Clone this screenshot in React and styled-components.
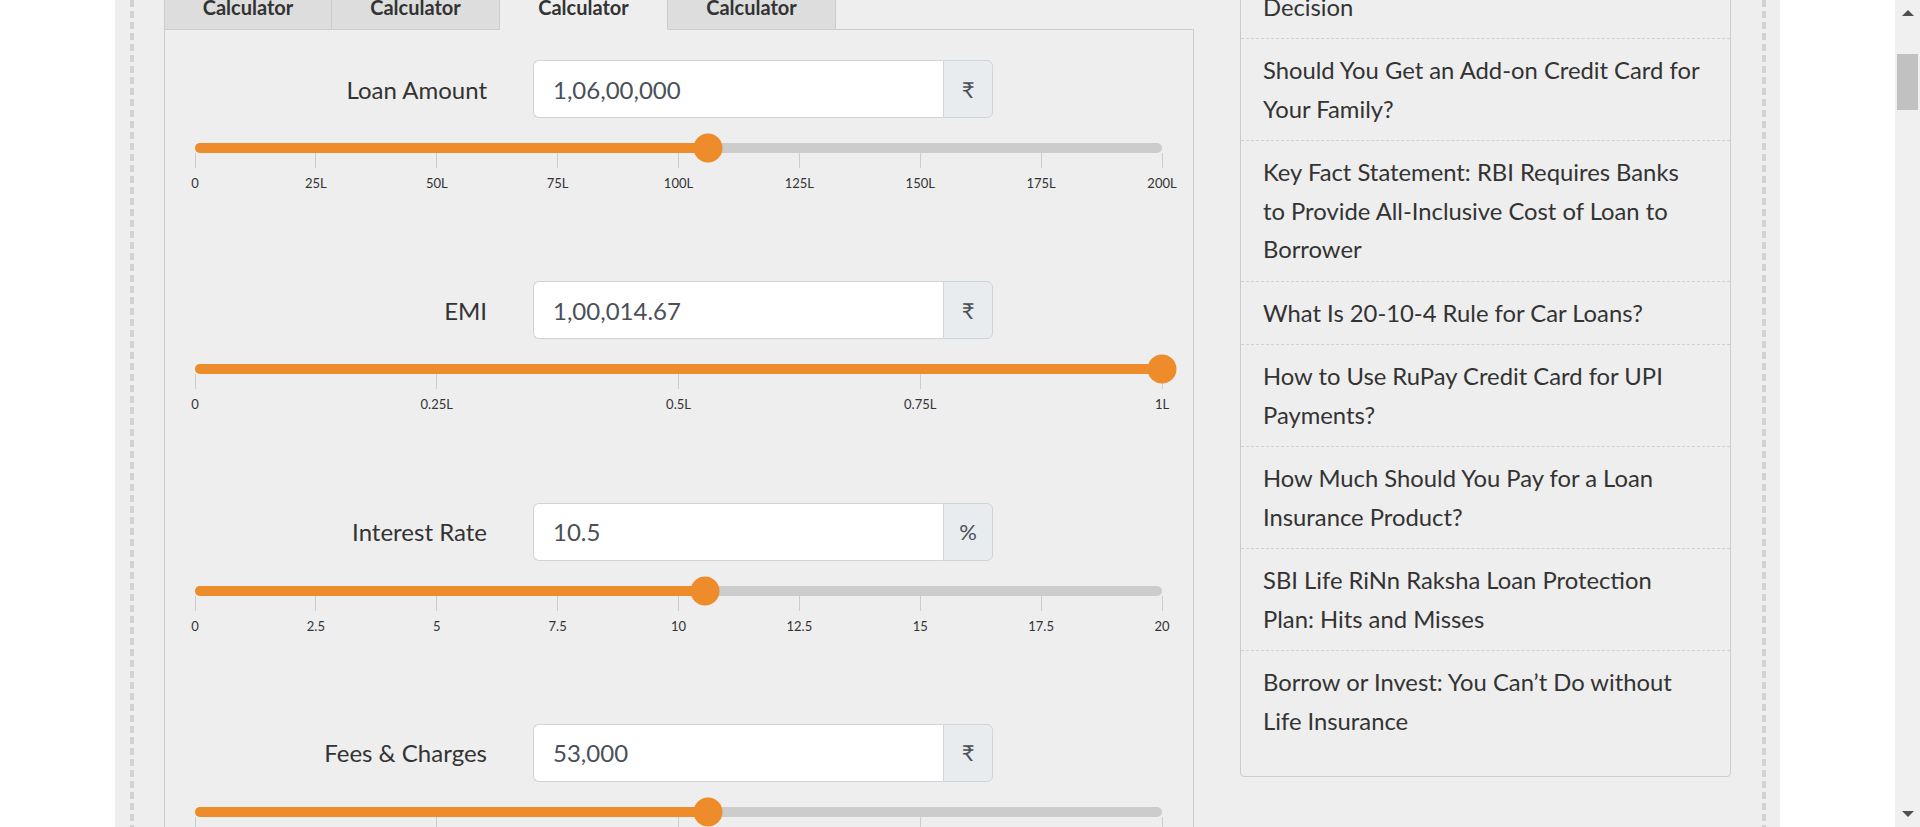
import React from 'react';
import styled, { createGlobalStyle } from 'styled-components';

const GlobalStyle = createGlobalStyle`
  html, body {
    margin: 0;
    padding: 0;
    height: 827px;
    overflow: hidden;
    background: #ffffff;
    font-family: Lato, "Open Sans", sans-serif;
    color: #333333;
  }
  * {
    box-sizing: border-box;
  }
`;

const Viewport = styled.div`
  display: flex;
  height: 827px;
  overflow: hidden;
`;

const Page = styled.div`
  flex: 1;
  height: 100%;
  overflow: hidden;
  background: #ffffff;
`;

const Container = styled.div`
  margin: 0 115px;
  height: 100%;
  padding: 0 14px 0 15px;
  background: #eeeeee;
`;

const Inner = styled.div`
  display: flow-root;
  height: 100%;
  padding: 0 35px 0 34px;
  background-image:
    repeating-linear-gradient(to bottom, #d2d2d2 0 7px, transparent 7px 11px),
    repeating-linear-gradient(to bottom, #d2d2d2 0 7px, transparent 7px 11px);
  background-size: 4px 100%, 4px 100%;
  background-position: left top, right top;
  background-repeat: no-repeat;
`;

const Columns = styled.div`
  display: flex;
  align-items: flex-start;
  gap: 46px;
  margin-top: -64px;
`;

const MainColumn = styled.div`
  width: 1030px;
  padding-top: 49px;
`;

const Tabs = styled.div`
  display: flex;
  position: relative;
  z-index: 1;
  margin-bottom: -1px;
`;

const Tab = styled.div`
  width: 168px;
  height: 45px;
  padding-bottom: 2px;
  display: flex;
  align-items: center;
  justify-content: center;
  font-size: 20px;
  font-weight: 700;
  color: #333333;
  background: ${({ active }) => (active ? '#eeeeee' : '#dddddd')};
  border: 1px solid #cccccc;
  border-left-width: ${({ first }) => (first ? '1px' : '0')};
  border-bottom: 1px solid ${({ active }) => (active ? '#eeeeee' : '#cccccc')};
`;

const Panel = styled.div`
  border: 1px solid #cccccc;
  background: #eeeeee;
  padding: 30px 30px 40px 0;
`;

const Section = styled.div`
  margin-bottom: 90.3px;
`;

const FieldRow = styled.div`
  display: grid;
  grid-template-columns: 322px 460px;
  column-gap: 46px;
  align-items: center;
`;

const Label = styled.label`
  text-align: right;
  font-size: 24px;
  color: #333333;
`;

const InputGroup = styled.div`
  display: flex;
  height: 58px;
`;

const TextInput = styled.div`
  flex: 1;
  display: flex;
  align-items: center;
  padding: 0 19px;
  background: #ffffff;
  border: 1px solid #ced4da;
  border-right: 0;
  border-radius: 6px 0 0 6px;
  font-size: 24px;
  color: #495057;
`;

const Addon = styled.div`
  width: 50px;
  display: flex;
  align-items: center;
  justify-content: center;
  background: #e9ecef;
  border: 1px solid #ced4da;
  border-radius: 0 6px 6px 0;
  font-size: 22px;
  color: #495057;
`;

const SliderBox = styled.div`
  margin: 25px 0 0 30px;
  width: 967px;
`;

const Track = styled.div`
  position: relative;
  height: 10px;
  border-radius: 5px;
  background: #cccccc;
`;

const Fill = styled.div`
  height: 100%;
  border-radius: 5px;
  background: #ee8c2c;
`;

const Handle = styled.div`
  position: absolute;
  top: 50%;
  width: 29px;
  height: 29px;
  border-radius: 50%;
  background: #ee8c2c;
  transform: translate(-50%, -50%);
`;

const Scale = styled.div`
  display: flex;
  justify-content: space-between;
`;

const Tick = styled.div`
  width: 0;
  display: flex;
  flex-direction: column;
  align-items: center;
`;

const TickLine = styled.div`
  width: 1px;
  height: 15px;
  background: #cccccc;
`;

const TickLabel = styled.div`
  margin-top: 7px;
  font-size: 13px;
  line-height: 16px;
  white-space: nowrap;
  color: #333333;
`;

const Sidebar = styled.div`
  width: 491px;
  border: 1px solid #cccccc;
  border-radius: 4px;
  padding-bottom: 24px;
`;

const SideItem = styled.div`
  padding: 12px 10px 12px 22px;
  font-size: 23.8px;
  line-height: 38.5px;
  color: #333333;
  border-top: ${({ first }) => (first ? '0' : '1px dashed #d0d0d0')};
`;

const SideLine = styled.span`
  display: block;
  white-space: nowrap;
`;

const Scrollbar = styled.div`
  width: 25px;
  height: 100%;
  background: #f0f0f0;
  display: flex;
  flex-direction: column;
  align-items: center;
`;

const ArrowButton = styled.div`
  height: 25px;
  width: 100%;
  display: flex;
  align-items: center;
  justify-content: center;
`;

const Thumb = styled.div`
  width: 21px;
  height: 56px;
  margin-top: 29px;
  background: #c1c1c1;
`;

const Spacer = styled.div`
  flex: 1;
`;

const range = (n, f) => Array.from({ length: n }, (_, i) => f(i));

const sections = [
  {
    label: 'Loan Amount',
    value: '1,06,00,000',
    unit: '₹',
    pct: 53,
    ticks: ['0', '25L', '50L', '75L', '100L', '125L', '150L', '175L', '200L'],
  },
  {
    label: 'EMI',
    value: '1,00,014.67',
    unit: '₹',
    pct: 100,
    ticks: ['0', '0.25L', '0.5L', '0.75L', '1L'],
  },
  {
    label: 'Interest Rate',
    value: '10.5',
    unit: '%',
    pct: 52.7,
    ticks: range(9, (i) => String(i * 2.5)),
  },
  {
    label: 'Fees & Charges',
    value: '53,000',
    unit: '₹',
    pct: 53,
    ticks: ['0', '25K', '50K', '75K', '1L'],
  },
];

// article titles, one string per displayed line
const articles = [
  ['Choosing the Right Personal Loan', 'Decision'],
  ['Should You Get an Add-on Credit Card for', 'Your Family?'],
  ['Key Fact Statement: RBI Requires Banks', 'to Provide All-Inclusive Cost of Loan to', 'Borrower'],
  ['What Is 20-10-4 Rule for Car Loans?'],
  ['How to Use RuPay Credit Card for UPI', 'Payments?'],
  ['How Much Should You Pay for a Loan', 'Insurance Product?'],
  ['SBI Life RiNn Raksha Loan Protection', 'Plan: Hits and Misses'],
  ['Borrow or Invest: You Can’t Do without', 'Life Insurance'],
];

const Arrow = ({ down }) => (
  <svg width="12" height="7" viewBox="0 0 12 7">
    <path d={down ? 'M0 0H12L6 6Z' : 'M0 7H12L6 1Z'} fill="#505050" />
  </svg>
);

const Slider = ({ pct, ticks }) => (
  <SliderBox>
    <Track>
      <Fill style={{ width: `${pct}%` }} />
      <Handle style={{ left: `${pct}%` }} />
    </Track>
    <Scale>
      {ticks.map((t) => (
        <Tick key={t}>
          <TickLine />
          <TickLabel>{t}</TickLabel>
        </Tick>
      ))}
    </Scale>
  </SliderBox>
);

const App = () => (
  <>
    <GlobalStyle />
    <Viewport>
      <Page>
        <Container>
          <Inner>
            <Columns>
              <MainColumn>
                <Tabs>
                  <Tab first>Calculator</Tab>
                  <Tab>Calculator</Tab>
                  <Tab active>Calculator</Tab>
                  <Tab>Calculator</Tab>
                </Tabs>
                <Panel>
                  {sections.map((s) => (
                    <Section key={s.label}>
                      <FieldRow>
                        <Label>{s.label}</Label>
                        <InputGroup>
                          <TextInput>{s.value}</TextInput>
                          <Addon>{s.unit}</Addon>
                        </InputGroup>
                      </FieldRow>
                      <Slider pct={s.pct} ticks={s.ticks} />
                    </Section>
                  ))}
                </Panel>
              </MainColumn>
              <Sidebar>
                {articles.map((lines, i) => (
                  <SideItem key={lines[0]} first={i === 0}>
                    {lines.map((l) => <SideLine key={l}>{l}</SideLine>)}
                  </SideItem>
                ))}
              </Sidebar>
            </Columns>
          </Inner>
        </Container>
      </Page>
      <Scrollbar>
        <ArrowButton><Arrow /></ArrowButton>
        <Thumb />
        <Spacer />
        <ArrowButton><Arrow down /></ArrowButton>
      </Scrollbar>
    </Viewport>
  </>
);

export default App;
